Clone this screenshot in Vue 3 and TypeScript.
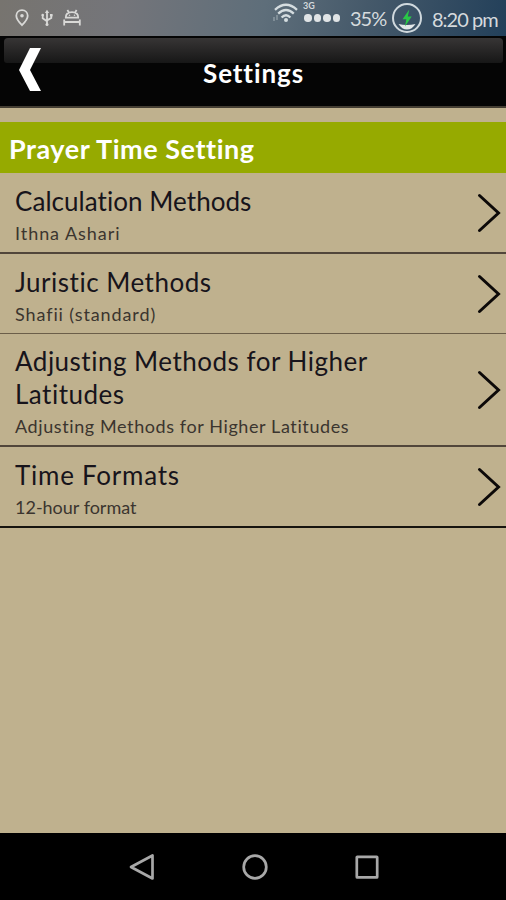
<script setup lang="ts">
interface Setting {
  id: string
  title: string[]
  value: string
}

const settings: Setting[] = [
  { id: 'calculation', title: ['Calculation Methods'], value: 'Ithna Ashari' },
  { id: 'juristic', title: ['Juristic Methods'], value: 'Shafii (standard)' },
  {
    id: 'latitudes',
    title: ['Adjusting Methods for Higher', 'Latitudes'],
    value: 'Adjusting Methods for Higher Latitudes',
  },
  { id: 'formats', title: ['Time Formats'], value: '12-hour format' },
]
</script>

<template>
  <main class="screen">
    <div class="status">
      <div class="status-left">
        <svg class="pin" width="14" height="18" viewBox="0 0 14 18">
          <path d="M7 1.2C3.7 1.2 1.3 3.6 1.3 6.8C1.3 10.6 7 16.2 7 16.2S12.7 10.6 12.7 6.8C12.7 3.6 10.3 1.2 7 1.2Z" />
          <circle class="solid" cx="7" cy="6.8" r="1.8" />
        </svg>
        <svg class="usb" width="12" height="18" viewBox="0 0 12 18">
          <path d="M6 2V15M1.7 6V9.2L6 12.2M10.3 6V9L6 11.4" />
          <path class="solid" d="M3.8 4L6 .7L8.2 4Z" />
          <circle class="solid" cx="6" cy="15.4" r="1.5" />
          <circle class="solid" cx="1.7" cy="6" r="1.3" />
          <path class="solid" d="M9 5H11.6V7.4H9Z" />
        </svg>
        <svg class="droid" width="18" height="18" viewBox="0 0 18 18">
          <path d="M2.8 8.6C2.8 5 5.4 3.2 9 3.2S15.2 5 15.2 8.6ZM4.4 1L6 3.6M13.6 1L12 3.6M1.2 10.6V16.6M16.8 10.6V16.6M1.2 13H16.8" />
          <circle class="solid" cx="6.5" cy="6.2" r=".8" />
          <circle class="solid" cx="11.5" cy="6.2" r=".8" />
        </svg>
      </div>
      <div class="status-right">
        <svg class="wifi" width="26" height="20" viewBox="0 0 26 20">
          <path d="M2 6.8Q13-3.2 24 6.8M5.2 10.7Q13 3.3 20.8 10.7M8.6 14.5Q13 10 17.4 14.5" />
          <circle cx="13" cy="17" r="2" />
          <path class="traffic" d="M1 14V18M4 12V17" />
        </svg>
        <div class="signal">
          <span class="network">3G</span>
          <span class="dots"><i v-for="n in 4" :key="n"></i></span>
        </div>
        <span class="percent">35%</span>
        <svg class="battery" width="32" height="32" viewBox="0 0 32 32">
          <circle cx="16" cy="16" r="14" />
          <path class="level" d="M7.5 22Q16 24 24.5 22Q21 27.5 16 27.5T7.5 22Z" />
          <path class="bolt" d="M18.3 7.5L11.5 17.2H15.3L14 24.5L20.7 14.4H16.8Z" />
        </svg>
        <span class="clock">8:20 pm</span>
      </div>
    </div>

    <header class="bar">
      <svg class="back" width="24" height="46" viewBox="0 0 24 46">
        <path d="M12 1H23L12 23L23 44H12L1 23Z" />
      </svg>
      <h1><span>Settings</span></h1>
    </header>

    <section class="content">
      <h2><span>Prayer Time Setting</span></h2>
      <ul>
        <li v-for="item in settings" :key="item.id" :class="item.id">
          <div class="copy">
            <div v-for="line in item.title" :key="line" class="title">{{ line }}</div>
            <div class="value">{{ item.value }}</div>
          </div>
          <svg class="chevron" width="24" height="40" viewBox="0 0 24 40">
            <path d="M2.5 2.5L21.5 20L2.5 37.5" />
          </svg>
        </li>
      </ul>
    </section>

    <nav class="nav">
      <svg width="28" height="28" viewBox="0 0 28 28"><path d="M24.5 2.5V25.5L3 14Z" /></svg>
      <svg width="28" height="28" viewBox="0 0 28 28"><circle cx="14" cy="14" r="11.3" /></svg>
      <svg width="28" height="28" viewBox="0 0 28 28"><rect x="3.8" y="3.8" width="20.4" height="20.6" rx=".5" /></svg>
    </nav>
  </main>
</template>

<style>
body {
  margin: 0;
  background: #bfb18e;
}
</style>

<style scoped>
.screen {
  width: 506px;
  height: 900px;
  display: flex;
  flex-direction: column;
  overflow: hidden;
  background: #bfb18e;
  font-family: Lato, "Liberation Sans", sans-serif;
  font-variant-ligatures: none;
  color: #17141b;
}
svg {
  display: block;
  flex: none;
  fill: none;
}
.status {
  height: 36px;
  flex: none;
  box-sizing: border-box;
  padding: 0 8px 0 15px;
  display: flex;
  justify-content: space-between;
  background: linear-gradient(100deg, #77746f 0%, #74757a 24%, #5e6e7a 52%, #45596a 72%, #23405a 100%);
  color: #d5dadd;
}
.status-left,
.status-right {
  display: flex;
  align-items: center;
}
.status-left svg {
  stroke: #d9d9d7;
  stroke-width: 1.8;
}
.status-left .solid {
  fill: #d9d9d7;
  stroke: none;
}
.usb {
  margin-left: 12px;
}
.droid {
  margin-left: 10px;
}
.wifi {
  margin: -10px 4px 0 0;
  stroke: #d5dde0;
  stroke-width: 2.3;
}
.wifi circle {
  fill: #d5dde0;
  stroke: none;
}
.wifi .traffic {
  stroke-width: 1;
  opacity: .6;
}
.signal {
  width: 37px;
  height: 36px;
  display: flex;
  flex-direction: column;
}
.network {
  height: 14px;
  font-size: 9px;
  line-height: 12px;
  font-weight: 700;
}
.dots {
  display: flex;
  gap: 2px;
  padding-left: 1px;
}
.dots i {
  width: 7.5px;
  height: 7.5px;
  border-radius: 50%;
  background: #e0e4e6;
}
.percent {
  width: 37px;
  margin-left: 10px;
  font-size: 20px;
  white-space: nowrap;
  letter-spacing: -1px;
}
.battery {
  margin-left: 4px;
  stroke: #d0d9de;
  stroke-width: 2;
}
.battery .level {
  fill: #e2e7e9;
  stroke: none;
}
.battery .bolt {
  fill: #29c947;
  stroke: none;
}
.clock {
  width: 66px;
  margin-left: 9px;
  padding-top: 2px;
  font-size: 20px;
  white-space: nowrap;
  letter-spacing: -1px;
}
.bar {
  height: 72px;
  flex: none;
  box-sizing: border-box;
  border-bottom: 2px solid #443e33;
  padding: 2px 3px 0 4px;
  display: grid;
  grid-template-rows: 68px;
  grid-template-columns: 1fr;
  background: #050505;
}
.bar::before {
  content: "";
  grid-area: 1 / 1;
  height: 25px;
  border-radius: 4px 4px 3px 3px;
  background: linear-gradient(#373535, #171717);
}
.back {
  grid-area: 1 / 1;
  margin: 9px 0 0 14px;
  fill: #fff;
}
h1,
h2 {
  margin: 0;
  color: #fff;
  font-weight: 700;
  white-space: nowrap;
}
h1 {
  grid-area: 1 / 1;
  text-align: center;
  font-size: 26px;
  line-height: 70px;
  letter-spacing: .9px;
}
.content {
  flex: 1;
  padding-top: 14px;
}
h2 {
  height: 51px;
  box-sizing: border-box;
  padding-left: 9px;
  background: #96aa00;
  font-size: 27px;
  line-height: 54px;
  letter-spacing: .55px;
}
ul {
  margin: 0;
  padding: 0;
  list-style: none;
}
li {
  height: 80px;
  box-sizing: border-box;
  border-bottom: 2px solid #51463a;
  padding: 0 5px 0 15px;
  display: flex;
  align-items: center;
  justify-content: space-between;
}
.calculation {
  height: 81px;
}
.calculation .title {
  letter-spacing: .05px;
}
.calculation .value {
  letter-spacing: .95px;
}
.juristic {
  border-bottom: 1px solid #6b5e49;
}
.juristic .title {
  letter-spacing: .5px;
}
.juristic .value {
  letter-spacing: .9px;
}
.latitudes {
  height: 113px;
}
.latitudes .title {
  letter-spacing: .5px;
}
.latitudes .value {
  letter-spacing: .6px;
}
.formats {
  height: 81px;
  border-color: #17140f;
}
.formats .title {
  letter-spacing: .75px;
}
.copy {
  padding-top: 7px;
  white-space: nowrap;
}
.title {
  font-size: 26px;
  line-height: 33px;
}
.value {
  font-size: 18px;
  line-height: 30px;
  color: #3b352f;
}
.chevron {
  stroke: #0c0908;
  stroke-width: 3;
  stroke-linecap: round;
}
.nav {
  height: 67px;
  flex: none;
  padding: 0 125px 0 128px;
  box-sizing: border-box;
  display: flex;
  align-items: center;
  justify-content: space-between;
  background: #000;
}
.nav svg {
  stroke: #a8a8a8;
  stroke-width: 2.7;
  stroke-linejoin: round;
}
</style>
